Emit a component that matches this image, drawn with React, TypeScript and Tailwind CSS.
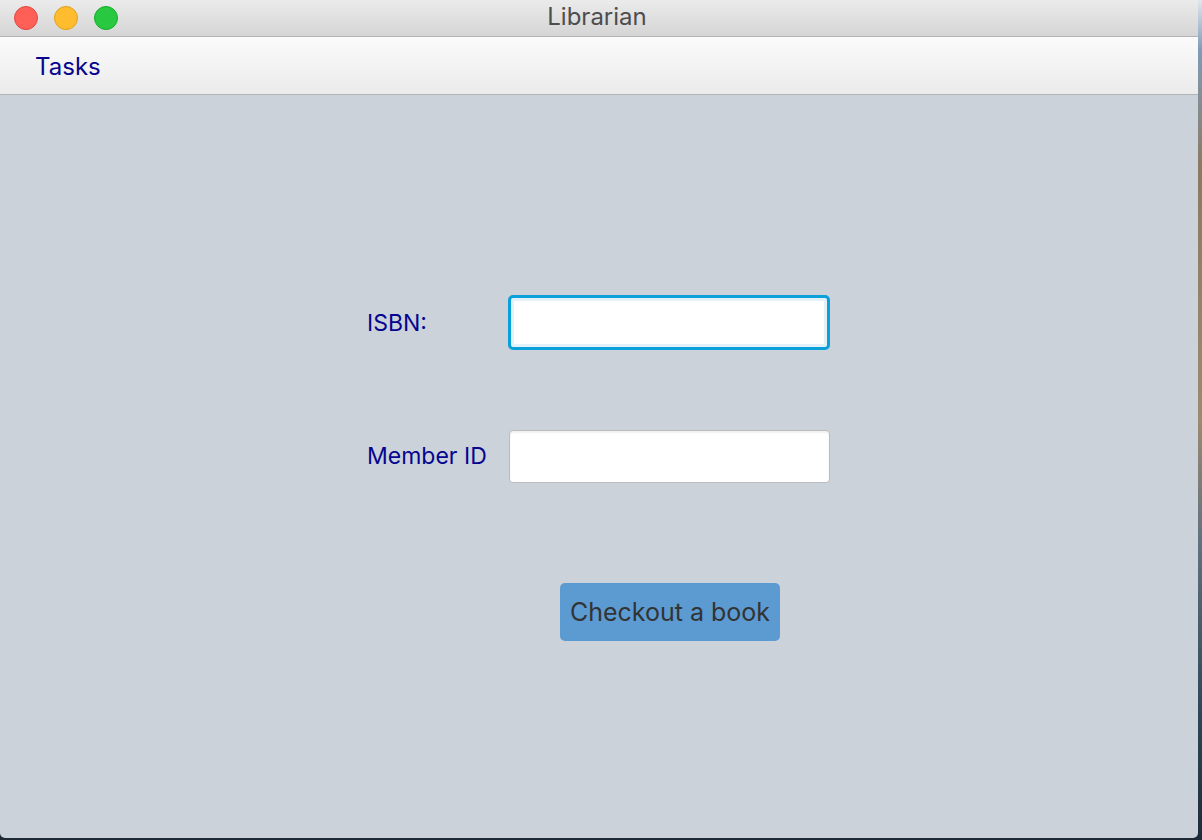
import React from 'react';

// Librarian window: checkout form
export default function App(): React.ReactElement {
  return (
    <div className="w-[1202px] h-[840px] flex bg-[#1d2a36] overflow-hidden font-['Inter','Roboto',sans-serif]">
      <div className="w-[1198px] h-[838px] flex flex-col bg-[#cbd2da] rounded-b-[5px] overflow-hidden">
        {/* title bar */}
        <div className="h-[37px] shrink-0 flex items-center bg-gradient-to-b from-[#ebebeb] to-[#d5d5d5] border-b border-[#b3b3b3]">
          <div className="flex items-center gap-[16px] pl-[14px]">
            <span className="w-[24px] h-[24px] rounded-full bg-[#fe5f57] border border-[#e2463f]" />
            <span className="w-[24px] h-[24px] rounded-full bg-[#febc2e] border border-[#e1a116]" />
            <span className="w-[24px] h-[24px] rounded-full bg-[#28c840] border border-[#14ae2b]" />
          </div>
          <div className="flex-1 text-center text-[24px] text-[#4d4d4d] pr-[122px] -mt-[2px]">Librarian</div>
        </div>

        {/* menu bar */}
        <div className="h-[58px] shrink-0 flex items-center px-[35px] bg-gradient-to-b from-[#fbfbfb] to-[#ebebeb] border-b border-[#b4b4b4]">
          <span className="text-[24px] text-[#05058f] mt-[3px]">Tasks</span>
        </div>

        {/* form */}
        <div className="flex-1 flex flex-col pt-[200px] pl-[367px]">
          <div className="flex items-center h-[55px]">
            <label className="w-[141px] text-[23px] text-[#05058f] mt-[2px]">ISBN:</label>
            <div className="w-[322px] h-[55px] rounded-[5px] border-[3px] border-[#0aa0d9] bg-[#e3f1f8] p-[3px]">
              <input className="w-full h-full bg-white outline-none" />
            </div>
          </div>

          <div className="flex items-center h-[54px] mt-[79px]">
            <label className="w-[142px] text-[23px] text-[#05058f] mt-[1px]">Member ID</label>
            <input className="w-[321px] h-[53px] rounded-[4px] border border-[#bcbcbc] bg-white shadow-[inset_0_2px_2px_rgba(0,0,0,0.06)] outline-none" />
          </div>

          <div className="pl-[193px] mt-[100px]">
            <button className="w-[220px] h-[58px] rounded-[5px] bg-[#5b9bd2] text-[25px] text-[#333333] pt-[2px]">
              Checkout a book
            </button>
          </div>
        </div>
      </div>
      <div className="w-[4px] h-full bg-[linear-gradient(to_bottom,#dfe6ee_0%,#7f9bb8_6%,#8a7a62_20%,#9b8a70_50%,#5f7080_65%,#2e4658_85%,#1c2c3a_100%)]" />
    </div>
  );
}
